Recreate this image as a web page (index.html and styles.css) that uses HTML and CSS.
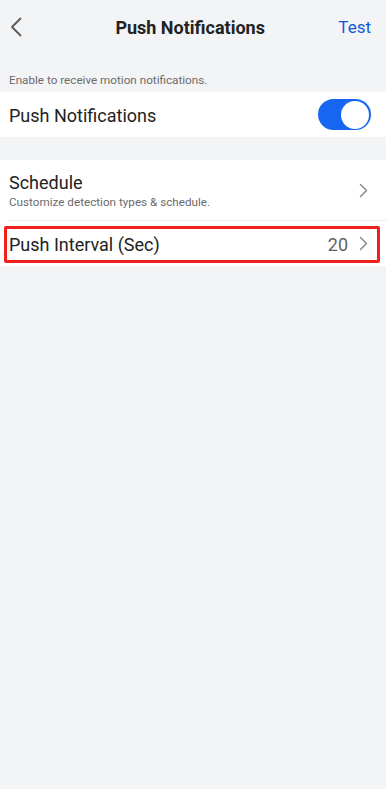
FILE: index.html
```html
<!DOCTYPE html>
<html>
<head>
<meta charset="utf-8">
<link rel="stylesheet" href="styles.css">
</head>
<body>
<div class="page">
  <header class="header">
    <svg class="back" width="12" height="20" viewBox="0 0 12 20"><path d="M10.5 1.5 L2 10 L10.5 18.5" fill="none" stroke="#5a5a5a" stroke-width="1.8" stroke-linecap="round" stroke-linejoin="round"/></svg>
    <div class="title">Push Notifications</div>
    <div class="action">Test</div>
  </header>
  <div class="hint">Enable to receive motion notifications.</div>
  <div class="group">
    <div class="row">
      <div class="label">Push Notifications</div>
      <div class="toggle"><div class="knob"></div></div>
    </div>
  </div>
  <div class="group second">
    <div class="row tall">
      <div class="texts">
        <div class="label">Schedule</div>
        <div class="sub">Customize detection types &amp; schedule.</div>
      </div>
      <svg class="chev" width="9" height="15" viewBox="0 0 9 15"><path d="M1.5 1.5 L7.5 7.5 L1.5 13.5" fill="none" stroke="#8e8e9a" stroke-width="1.6" stroke-linecap="round" stroke-linejoin="round"/></svg>
    </div>
    <div class="divider"></div>
    <div class="row highlight">
      <div class="label">Push Interval (Sec)</div>
      <div class="value">20</div>
      <svg class="chev" width="9" height="15" viewBox="0 0 9 15"><path d="M1.5 1.5 L7.5 7.5 L1.5 13.5" fill="none" stroke="#8e8e9a" stroke-width="1.6" stroke-linecap="round" stroke-linejoin="round"/></svg>
      <div class="mark"></div>
    </div>
  </div>
</div>
</body>
</html>
```
FILE: styles.css
```css
* { box-sizing: border-box; }
html, body {
  margin: 0;
  padding: 0;
  background: #f3f4f6;
  font-family: Roboto, "Liberation Sans", sans-serif;
}
.page {
  width: 386px;
  min-height: 789px;
  background: #f3f4f6;
}
.header {
  height: 54px;
  display: flex;
  align-items: center;
  padding: 0 15px 0 10px;
  position: relative;
}
.back { display: block; }
.title {
  flex: 1;
  text-align: center;
  font-size: 18px;
  font-weight: 700;
  color: #222;
  padding-left: 20px;
}
.action {
  font-size: 17px;
  color: #1458d6;
}
.hint {
  padding: 18px 9px 4px;
  font-size: 11.7px;
  line-height: 16px;
  color: #6b6b6b;
}
.group {
  background: #fff;
}
.second { margin-top: 23px; }
.row {
  display: flex;
  align-items: center;
  height: 45px;
  padding: 0 18px 0 9px;
  position: relative;
}
.row.tall { height: 60px; }
.label {
  flex: 1;
  font-size: 18px;
  color: #222;
  line-height: 21px;
  margin-top: 1px;
}
.texts { flex: 1; display: flex; flex-direction: column; }
.texts .label { flex: none; }
.sub {
  font-size: 11.7px;
  color: #6b6b6b;
  line-height: 16px;
  margin-top: 1px;
}
.toggle {
  width: 53px;
  height: 31px;
  border-radius: 16px;
  background: #1766f2;
  display: flex;
  align-items: center;
  justify-content: flex-end;
  padding-right: 2px;
  margin-right: -3px;
}
.knob {
  width: 28px;
  height: 28px;
  border-radius: 50%;
  background: #fff;
}
.divider {
  height: 1px;
  background: #ececee;
  margin-left: 8px;
}
.value {
  font-size: 18px;
  color: #626262;
  margin-right: 11px;
  margin-top: 1px;
}
.chev { display: block; }
.mark {
  position: absolute;
  left: 4px;
  top: 5px;
  width: 376px;
  height: 37px;
  border: 3px solid #f0201c;
  border-radius: 2px;
}
```
